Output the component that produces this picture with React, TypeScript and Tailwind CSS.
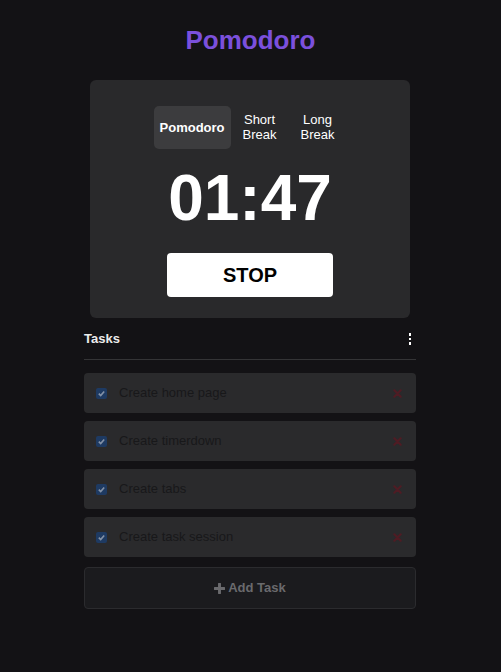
import React from "react";

const tasks = ["Create home page", "Create timerdown", "Create tabs", "Create task session"];

function Check() {
  return (
    <span className="flex h-[11px] w-[11px] items-center justify-center rounded-[2px] bg-[#1e3a62]">
      <svg width="9" height="9" viewBox="0 0 10 10">
        <path d="M2 5.2 L4.1 7.3 L8 2.8" fill="none" stroke="#8391a6" strokeWidth="1.8" />
      </svg>
    </span>
  );
}

function XIcon() {
  return (
    <svg width="9" height="9" viewBox="0 0 10 10">
      <path d="M1.5 1.5 L8.5 8.5 M8.5 1.5 L1.5 8.5" stroke="#4f1c24" strokeWidth="2.4" strokeLinecap="round" />
    </svg>
  );
}

export default function App() {
  return (
    <div
      className="min-h-[672px] w-full bg-[#131215] pt-[27px]"
      style={{ fontFamily: '"Liberation Sans", Arial, sans-serif' }}
    >
      <h1 className="text-center text-[26px] font-bold leading-[26px] text-[#7b50dc]">Pomodoro</h1>
      <div className="ml-[84px] mt-[27px] w-[332px]">
        <div className="mx-[6px] flex flex-col items-center rounded-[6px] bg-[#29292b] pt-[26px] pb-[21px]">
          <div className="flex items-center">
            <button className="rounded-[5px] bg-[#3c3c3e] px-[6px] py-[7px] text-[13px] font-bold leading-[29px] text-white">
              Pomodoro
            </button>
            <button className="px-3 py-[7px] text-[13px] leading-[14.5px] text-white">
              Short
              <br />
              Break
            </button>
            <button className="px-3 py-[7px] text-[13px] leading-[14.5px] text-white">
              Long
              <br />
              Break
            </button>
          </div>
          <div className="mt-[17px] text-[64px] font-bold leading-[64px] text-white">01:47</div>
          <button className="mt-[23px] h-[44px] w-[166px] rounded-[4px] bg-white text-[20px] font-bold text-black">
            STOP
          </button>
        </div>
        <div className="mt-[13px] flex h-[16px] items-center justify-between">
          <span className="text-[13px] font-bold text-[#ececec]">Tasks</span>
          <span className="mr-[5px] flex flex-col gap-[2px]">
            <span className="h-[2.5px] w-[2.5px] bg-white" />
            <span className="h-[2.5px] w-[2.5px] bg-white" />
            <span className="h-[2.5px] w-[2.5px] bg-white" />
          </span>
        </div>
        <div className="mt-[12px] h-px bg-[#343436]" />
        <div className="mt-[13px] flex flex-col gap-[8px]">
          {tasks.map((t) => (
            <div key={t} className="flex h-[40px] items-center rounded-[4px] bg-[#2a2a2c] pl-[12px] pr-[14px]">
              <Check />
              <span className="ml-[12px] flex-1 text-[13px] text-[#18181a]">{t}</span>
              <XIcon />
            </div>
          ))}
        </div>
        <button className="mt-[10px] flex h-[42px] w-full items-center justify-center gap-[3px] rounded-[4px] border border-[#2b2b2e] bg-[#1b1b1e] text-[13px] font-bold text-[#6a6a6d]">
          <svg width="11" height="11" viewBox="0 0 12 12">
            <path d="M6 1 V11 M1 6 H11" stroke="#6a6a6d" strokeWidth="3.2" strokeLinecap="round" />
          </svg>
          Add Task
        </button>
      </div>
    </div>
  );
}
